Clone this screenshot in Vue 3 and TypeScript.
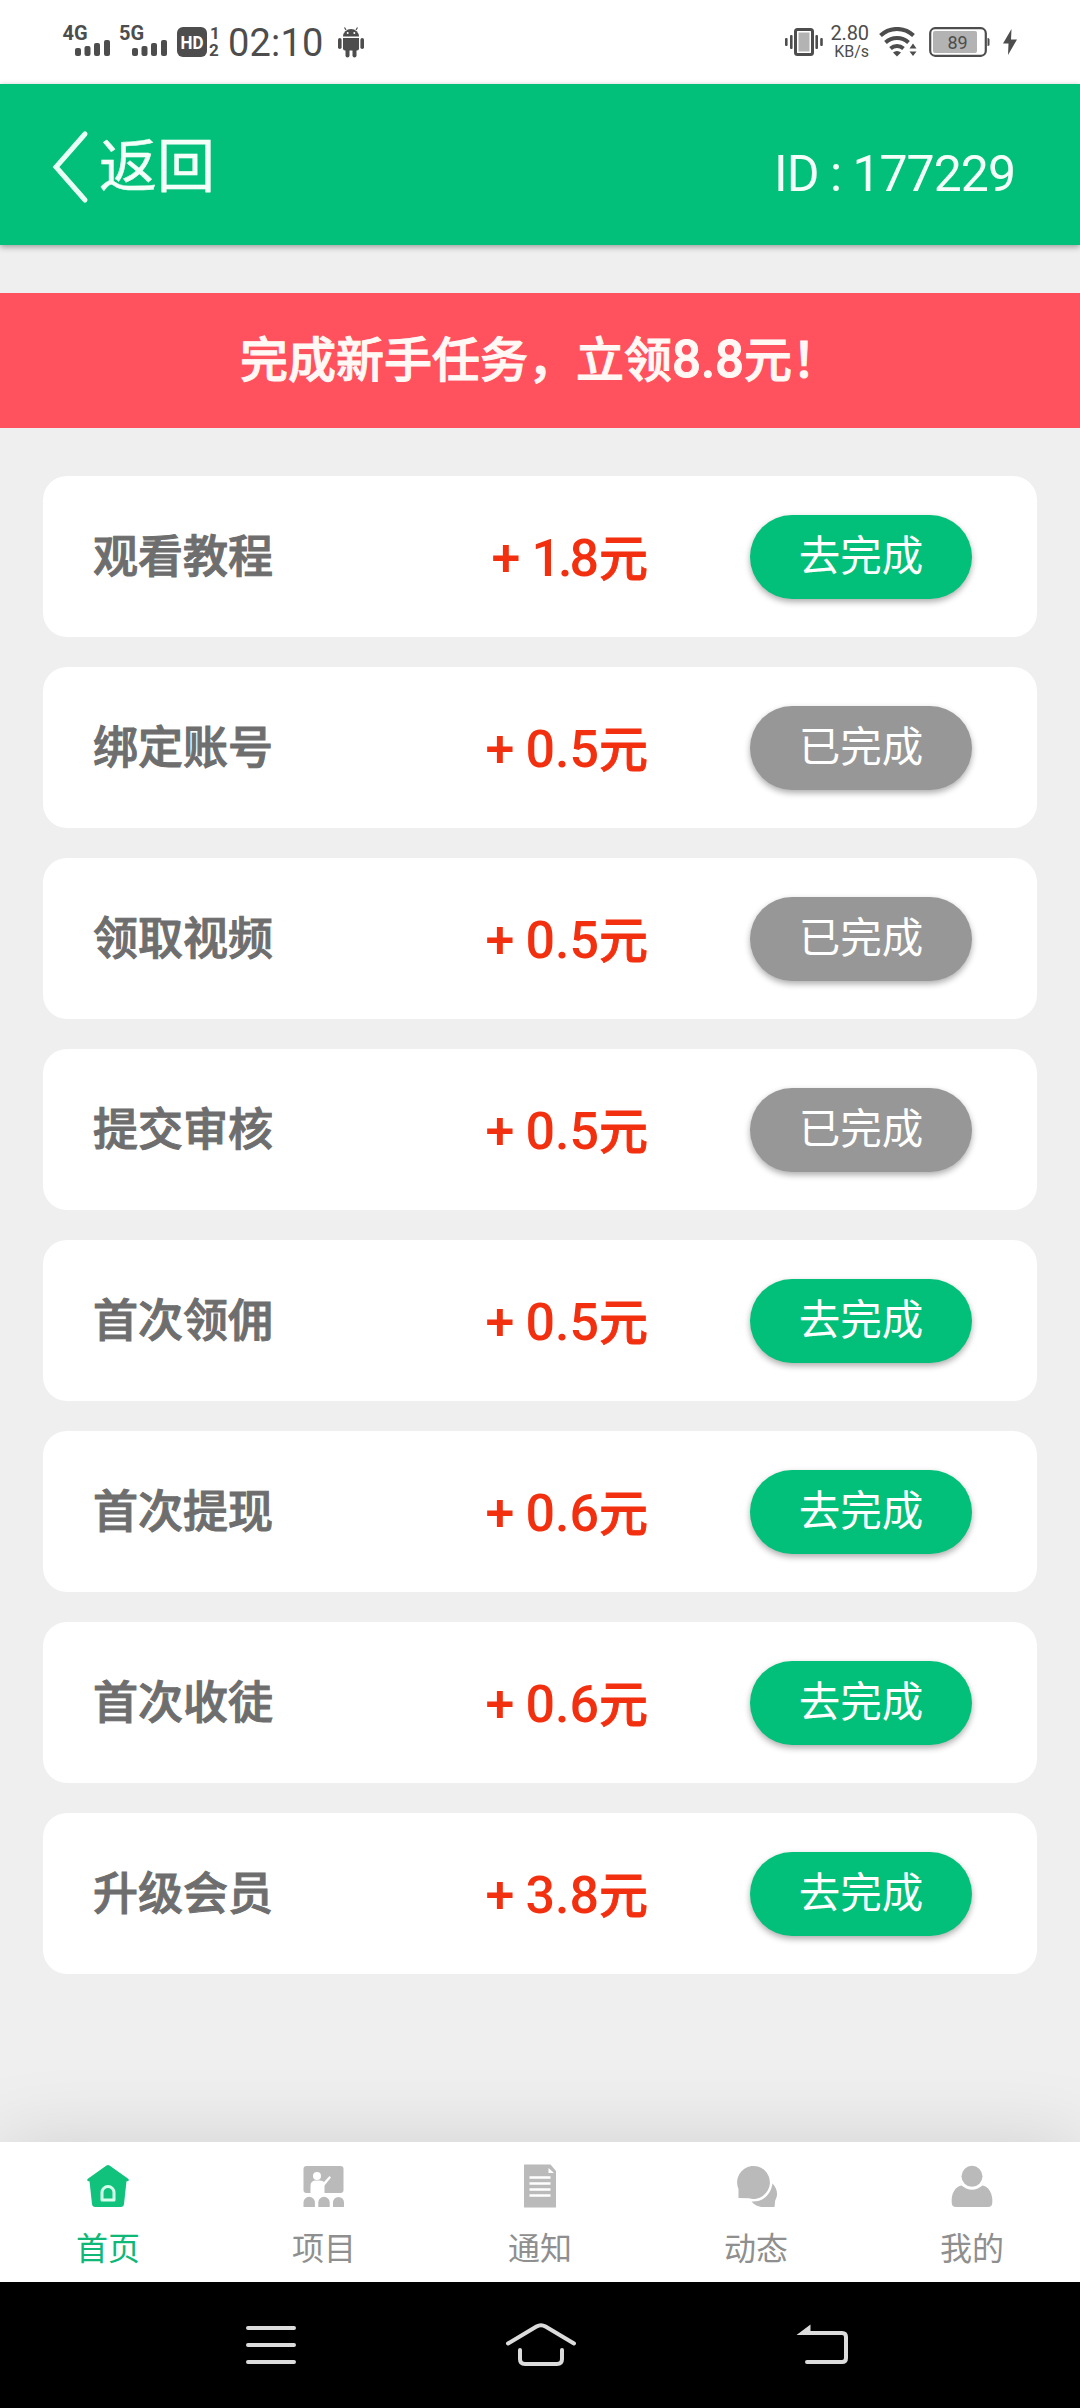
<script setup lang="ts">
interface Task {
  name: string
  amount: string
  done: boolean
}

interface Tab {
  key: string
  label: string
}

const tasks: Task[] = [
  { name: '观看教程', amount: '1.8', done: false },
  { name: '绑定账号', amount: '0.5', done: true },
  { name: '领取视频', amount: '0.5', done: true },
  { name: '提交审核', amount: '0.5', done: true },
  { name: '首次领佣', amount: '0.5', done: false },
  { name: '首次提现', amount: '0.6', done: false },
  { name: '首次收徒', amount: '0.6', done: false },
  { name: '升级会员', amount: '3.8', done: false },
]

const tabs: Tab[] = [
  { key: 'home', label: '首页' },
  { key: 'project', label: '项目' },
  { key: 'notice', label: '通知' },
  { key: 'feed', label: '动态' },
  { key: 'mine', label: '我的' },
]
</script>

<template>
  <div class="screen">
    <div class="status">
      <svg class="signal" width="57" height="46" viewBox="-5 -10 57 46">
        <text x="0.500" y="17" class="net">4G</text>
        <rect x="13" y="25" width="6" height="8" rx="2" />
        <rect x="22.500" y="23" width="6" height="10" rx="2" />
        <rect x="32" y="20" width="6" height="13" rx="2" />
        <rect x="42" y="17" width="6" height="16" rx="2" />
      </svg>
      <svg class="signal" width="57" height="46" viewBox="-5 -10 57 46">
        <text x="0" y="17" class="net">5G</text>
        <rect x="13" y="25" width="6" height="8" rx="2" />
        <rect x="22.500" y="23" width="6" height="10" rx="2" />
        <rect x="32" y="20" width="6" height="13" rx="2" />
        <rect x="42" y="17" width="6" height="16" rx="2" />
      </svg>
      <svg class="hd" width="44" height="46" viewBox="0 -4 44 46">
        <rect x="0" y="4" width="30" height="30" rx="6" />
        <text x="3.500" y="26" class="hd-text" textLength="23" lengthAdjust="spacingAndGlyphs">HD</text>
        <text x="33" y="15.500" class="sim">1</text>
        <text x="32" y="33" class="sim">2</text>
      </svg>
      <span class="clock">02:10</span>
      <svg class="android" width="26" height="32" viewBox="0 0 26 32">
        <path d="M5 10.500a8 7.500 0 0 1 16 0z" />
        <path d="M8 4 6.500 1.500M18 4l1.500-2.500" stroke="#4d4d4d" stroke-width="1.200" />
        <circle cx="9.700" cy="7" r="1" fill="#fff" />
        <circle cx="16.300" cy="7" r="1" fill="#fff" />
        <path d="M5 12h16v10.500a2 2 0 0 1-2 2H7a2 2 0 0 1-2-2z" />
        <rect x="0" y="12" width="3.600" height="11" rx="1.800" />
        <rect x="22.400" y="12" width="3.600" height="11" rx="1.800" />
        <rect x="7.500" y="22" width="4" height="9.500" rx="2" />
        <rect x="14.500" y="22" width="4" height="9.500" rx="2" />
      </svg>
      <div class="spacer"></div>
      <svg class="vibrate" width="38" height="30" viewBox="0 0 38 30">
        <rect x="10.500" y="2.500" width="17" height="25" rx="2" fill="#fff" stroke="#4d4d4d" stroke-width="3" />
        <rect x="13.500" y="5.500" width="11" height="19" fill="#b3b3b3" />
        <rect x="0" y="11" width="2.600" height="8" rx="1" />
        <rect x="5" y="8" width="2.600" height="14" rx="1" />
        <rect x="30.400" y="8" width="2.600" height="14" rx="1" />
        <rect x="35.200" y="11" width="2.600" height="8" rx="1" />
      </svg>
      <div class="rate">
        <span class="rate-value">2.80</span>
        <span class="rate-unit">KB/s</span>
      </div>
      <svg class="wifi" width="40" height="32" viewBox="0 0 40 32">
        <g fill="none" stroke="#4d4d4d" stroke-width="4">
          <path d="M1.500 8.500a24 24 0 0 1 33 0" />
          <path d="M6.500 15.500a17 17 0 0 1 23 0" />
          <path d="M11.500 21.500a10 10 0 0 1 13 0" />
        </g>
        <path d="M18 29.500l-4-4a6 6 0 0 1 8 0z" />
        <path d="M34 16.500l3.500 5h-7zM34 29l3.500-4.500h-7z" />
      </svg>
      <svg class="battery" width="61" height="32" viewBox="0 0 61 32">
        <rect x="1.200" y="2.200" width="55.600" height="27.600" rx="5" fill="#fff" stroke="#4d4d4d" stroke-width="2.200" />
        <rect x="4" y="5" width="44" height="22" rx="2" fill="#b3b3b3" />
        <path d="M58.500 12c2 0 2 1 2 2v4c0 1 0 2-2 2z" />
        <text x="18.500" y="22.500" class="charge">89</text>
      </svg>
      <svg class="bolt" width="14" height="28" viewBox="0 0 14 28">
        <path d="M8.500 1 0 15.500h5.500L5 27l9-15.500H8z" />
      </svg>
    </div>

    <header class="header">
      <div class="back">
        <svg width="38" height="74" viewBox="0 0 38 74">
          <path d="M33 4 4 37l29 33" fill="none" stroke="#e8fff5" stroke-width="5" stroke-linecap="round" />
        </svg>
        <span>返回</span>
      </div>
      <div class="uid">ID : 177229</div>
    </header>

    <div class="banner">完成新手任务，立领<span class="latin">8.8</span>元！</div>

    <main class="list">
      <div v-for="task in tasks" :key="task.name" class="card">
        <span class="name">{{ task.name }}</span>
        <span class="amount"><span class="plus">+</span><span :class="{ tight: task.amount[0] === '1' }">{{ task.amount }}</span><span class="yuan">元</span></span>
        <button class="action" :class="{ done: task.done }">{{ task.done ? '已完成' : '去完成' }}</button>
      </div>
    </main>

    <nav class="tabs">
      <div v-for="tab in tabs" :key="tab.key" class="tab" :class="{ active: tab.key === 'home' }">
        <svg width="46" height="46" viewBox="0 0 46 46">
          <template v-if="tab.key === 'home'">
            <path d="M21.500 2.500q1.500-1 3 0L43.500 16q1 1.800-.8 2.200H41.500L39 41q-.3 3-3.300 3H10.300q-3 0-3.300-3L4.500 18.200H3.300Q1.500 17.800 2.500 16z" />
            <path d="M17 37V29.500a6 6 0 0 1 12 0V37z" fill="none" stroke="#d5ffec" stroke-width="3" stroke-linejoin="round" />
          </template>
          <template v-else-if="tab.key === 'project'">
            <path d="M5.500 3h34q3 0 3 3v21q0 3-3 3h-34q-3 0-3-3V6q0-3 3-3z" />
            <circle cx="16" cy="13" r="4" fill="#fff" />
            <path d="M9.500 31v-8q0-5.500 5.500-5.500h4q2.500 0 4 1.500l5.500-6 1.500 1.500-6.500 8V31z" fill="#fff" />
            <path d="M2.500 44v-4.500a5.700 5.700 0 0 1 11.400 0V44zM17.300 44v-4.500a5.700 5.700 0 0 1 11.400 0V44zM32 44v-4.500a5.500 5.500 0 0 1 11 0V44z" />
          </template>
          <template v-else-if="tab.key === 'notice'">
            <path d="M7 1.500h26.500L39 8v36.500H7z" />
            <path d="M31.500 5v5H37z" fill="#fff" />
            <path d="M12.500 14.500h21M12.500 20.500h21M12.500 26.500h21M12.500 32.500h21" stroke="#fff" stroke-width="2.600" />
          </template>
          <template v-else-if="tab.key === 'feed'">
            <path d="M18.500 3a16.500 16.500 0 1 1-2.500 32.300L5.500 35v-9A16.500 16.500 0 0 1 18.500 3z" />
            <path d="M39.500 20.500c5.500 6 5.500 12 2.700 17L41.500 44H30c-5 0-9-2.500-11.500-5.500 11 1 19.500-7 21-18z" />
          </template>
          <template v-else>
            <circle cx="23" cy="13.300" r="10.500" />
            <path d="M12.500 22.500q10.500 8.500 21 0c5.500 1 9.300 6.500 9.800 13.500v3.500q0 4.500-4.500 4.500H7.200q-4.500 0-4.500-4.500V36c.5-7 4.300-12.500 9.800-13.500z" />
          </template>
        </svg>
        <span>{{ tab.label }}</span>
      </div>
    </nav>

    <div class="sysnav">
      <svg width="52" height="44" viewBox="0 0 52 44">
        <path d="M3 5h46M3 22h46M3 39h46" />
      </svg>
      <svg class="house" width="72" height="48" viewBox="0 0 72 48">
        <path d="M3 20.500 31.500 3.500q4.500-2.600 9 0L69 20.500" />
        <path d="M15 27v9q0 5 5 5h32q5 0 5-5V27" />
      </svg>
      <svg width="54" height="46" viewBox="0 0 54 46">
        <path d="M10 10h35q4 0 4 4v21q0 4-4 4H10" />
        <path d="M-.5 12 13.500 1.500V12z" class="head" />
      </svg>
    </div>
  </div>
</template>

<style>
body {
  margin: 0;
  background: #efefef;
}
</style>

<style scoped>
.screen {
  width: 1080px;
  height: 2408px;
  display: flex;
  flex-direction: column;
  overflow: hidden;
  background: #efefef;
  font-family: Roboto, "Noto Sans CJK SC", sans-serif;
}

.status {
  height: 84px;
  flex: none;
  box-sizing: border-box;
  display: flex;
  align-items: flex-start;
  padding: 0 63px 0 57px;
  background: #fff;
  color: #4d4d4d;
  fill: #4d4d4d;
}

.signal {
  margin-top: 13px;
}

.net {
  font: 700 20px Roboto, sans-serif;
}

.hd {
  margin: 19px 0 0 6px;
}

.hd-text {
  font: 700 19px Roboto, sans-serif;
  fill: #fff;
}

.sim {
  font: 700 17px Roboto, sans-serif;
}

.clock {
  margin: 21px 0 0 7px;
  width: 98px;
  font-size: 38px;
  line-height: 45px;
  letter-spacing: .2px;
  white-space: nowrap;
}

.android {
  margin: 26px 0 0 12px;
}

.spacer {
  flex: 1;
}

.vibrate {
  margin-top: 27px;
}

.rate {
  width: 42px;
  margin: 23px 0 0 4px;
  display: flex;
  flex-direction: column;
  align-items: flex-end;
}

.rate-value {
  font-size: 20px;
  line-height: 21px;
  letter-spacing: -.1px;
}

.rate-unit {
  font-size: 16px;
  line-height: 16px;
}

.wifi {
  margin: 27px 0 0 10px;
}

.battery {
  margin: 26px 0 0 10px;
}

.charge {
  font: 400 18px Roboto, sans-serif;
}

.bolt {
  margin: 28px 0 0 13px;
}

.header {
  height: 161px;
  flex: none;
  box-sizing: border-box;
  display: flex;
  justify-content: space-between;
  padding: 0 65px 0 52px;
  background: #02c07a;
  box-shadow: 0 2px 6px rgba(0, 0, 0, .35);
  color: #f4fffa;
}

.back {
  display: flex;
  align-items: flex-start;
}

.back svg {
  margin-top: 46px;
}

.back span {
  margin: 41px 0 0 9px;
  font-size: 58px;
  line-height: 84px;
  -webkit-text-stroke: .4px currentColor;
}

.uid {
  margin-top: 60px;
  font-size: 50px;
  line-height: 60px;
  letter-spacing: -1px;
  white-space: nowrap;
}

.banner {
  height: 135px;
  flex: none;
  box-sizing: border-box;
  margin-top: 48px;
  padding-top: 1px;
  background: #ff525e;
  color: #fff8f4;
  font-size: 48px;
  font-weight: 500;
  line-height: 133px;
  text-align: center;
  white-space: nowrap;
  -webkit-text-stroke: 1px currentColor;
}

.latin {
  font-size: 51px;
  line-height: 1;
}

.list {
  flex: 1;
  display: flex;
  flex-direction: column;
  gap: 30px;
  padding: 48px 43px 0;
}

.card {
  height: 161px;
  box-sizing: border-box;
  display: flex;
  align-items: center;
  padding: 0 65px 0 50px;
  border-radius: 24px;
  background: #fff;
}

.name {
  width: 200px;
  font-size: 45px;
  font-weight: 500;
  line-height: 66px;
  margin-top: 3px;
  color: #6e6e6e;
  -webkit-text-stroke: 1px currentColor;
}

.amount {
  width: 355px;
  margin-top: 5px;
  display: flex;
  justify-content: flex-end;
  align-items: baseline;
  line-height: 66px;
  font-size: 52px;
  font-weight: 500;
  color: #f23010;
}

.plus {
  margin-right: 11px;
}

.tight {
  margin-right: 3px;
  letter-spacing: -3px;
}

.yuan {
  font-size: 49px;
  -webkit-text-stroke: .8px currentColor;
}

.action {
  width: 222px;
  height: 84px;
  margin: 0 0 0 auto;
  padding: 0;
  border: 0;
  border-radius: 42px;
  background: #02c07a;
  box-shadow: 0 3px 6px rgba(0, 0, 0, .32);
  color: #fff;
  font-family: inherit;
  font-size: 41.500px;
  line-height: 84px;
}

.action.done {
  background: #979797;
}

.tabs {
  height: 140px;
  flex: none;
  display: flex;
  background: #fff;
  box-shadow: 0 0 80px rgba(0, 0, 0, .13);
}

.tab {
  flex: 1;
  display: flex;
  flex-direction: column;
  align-items: center;
  fill: #bababa;
  color: #8f8f8f;
  font-size: 32px;
  line-height: 44px;
}

.tab svg {
  margin: 21px 0 18px;
}

.tab.active {
  fill: #10c27c;
  color: #10b878;
}

.sysnav {
  position: relative;
  height: 126px;
  flex: none;
  box-sizing: border-box;
  display: flex;
  align-items: flex-start;
  padding: 41px 0 0 245px;
  background: #000;
}

.sysnav svg {
  fill: none;
  stroke: #dcdcdc;
  stroke-width: 4;
  stroke-linecap: round;
  overflow: visible;
}

.sysnav .house {
  margin: 0 220px 0 208px;
}

.sysnav .head {
  fill: #dcdcdc;
  stroke: none;
}
</style>
